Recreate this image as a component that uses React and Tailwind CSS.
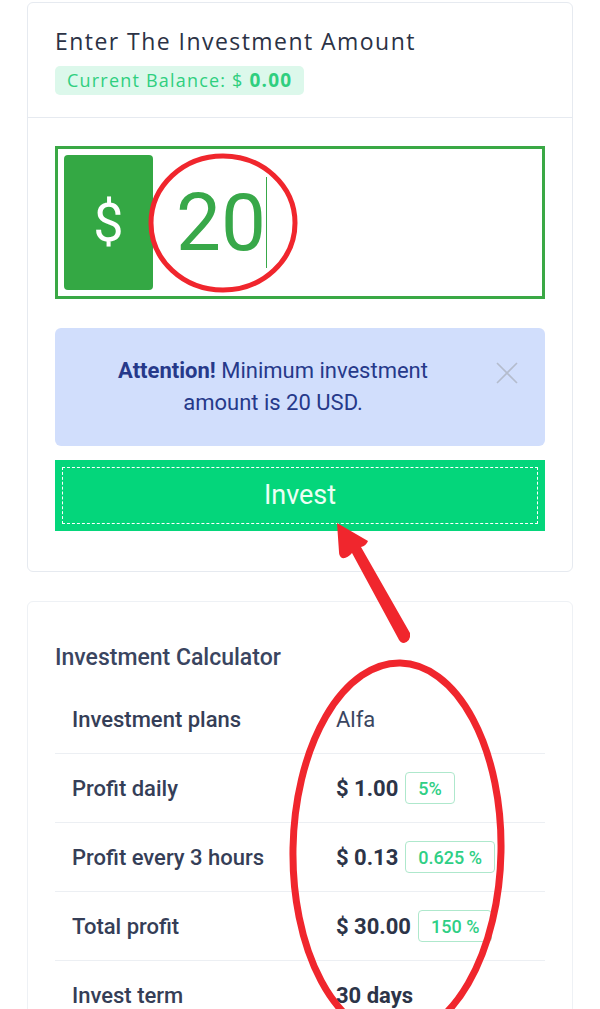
import React from "react";

const rows = [
  { label: "Investment plans", value: "Alfa", normal: true },
  { label: "Profit daily", value: "$ 1.00", badge: "5%" },
  { label: "Profit every 3 hours", value: "$ 0.13", badge: "0.625 %" },
  { label: "Total profit", value: "$ 30.00", badge: "150 %" },
  { label: "Invest term", value: "30 days" },
];

export default function App() {
  return (
    <div className="relative w-[600px] h-[1009px] overflow-hidden bg-white" style={{ fontFamily: "Roboto, 'Liberation Sans', sans-serif" }}>
      <div className="mx-[27px] pt-[2px] flex flex-col gap-[29px]">
        {/* Card 1 */}
        <div className="border border-[#e6eaf0] rounded-[6px] bg-white">
          <div className="px-[27px] pt-[23px] pb-[22px] border-b border-[#e6eaf0]">
            <div className="text-[23px] leading-[30px] font-medium text-[#2b3245] tracking-[1.45px]" style={{ fontFamily: "'Open Sans', sans-serif" }}>
              Enter The Investment Amount
            </div>
            <div className="mt-[10px] inline-flex items-center h-[29px] px-[12px] rounded-[5px] bg-[#dcf8eb] text-[#2fcf7f] text-[18px] tracking-[1.2px]" style={{ fontFamily: "'Open Sans', sans-serif" }}>
              Current Balance: $&nbsp;<span className="font-bold text-[19px]">0.00</span>
            </div>
          </div>
          <div className="px-[27px] pt-[28px] pb-[40px] flex flex-col">
            <div className="h-[153px] border-[3px] border-[#3aa845] p-[6px] flex">
              <div className="w-[89px] h-full rounded-[4px] bg-[#34a844] flex items-center justify-center text-white text-[54px] font-normal">$</div>
              <div className="flex items-center pl-[23px]">
                <span className="text-[#38a849] text-[80px] leading-none">20</span>
                <span className="w-[1px] h-[91px] bg-[#38a849]" />
              </div>
            </div>
            <div className="mt-[29px] h-[118px] rounded-[6px] bg-[#d1defc] relative flex items-center justify-center pr-[54px]">
              <p className="text-center text-[22px] leading-[32px] text-[#26398a] w-[340px]">
                <b className="font-bold">Attention!</b> Minimum investment amount is 20 USD.
              </p>
              <svg className="absolute right-[26px] top-[33px]" width="24" height="24" viewBox="0 0 24 24" fill="none" stroke="#b4bccd" strokeWidth="1.6">
                <path d="M2 2 L22 22 M22 2 L2 22" />
              </svg>
            </div>
            <button className="mt-[14px] h-[71px] bg-[#04d67b] p-[7px]">
              <div className="h-full border-[1.5px] border-dashed border-white flex items-center justify-center text-[27px] text-[#ecfff5]">
                Invest
              </div>
            </button>
          </div>
        </div>

        {/* Card 2 */}
        <div className="border border-[#eef1f5] rounded-[6px] bg-white px-[27px] pt-[42px] h-[500px]">
          <div className="text-[23px] leading-[28px] font-medium text-[#3a4560]">Investment Calculator</div>
          <div className="mt-[13px]">
            {rows.map((r, i) => (
              <div key={i} className={`flex items-center h-[69px] ${i < rows.length - 1 ? "border-b border-[#eceff3]" : ""}`}>
                <div className="w-[281px] pl-[17px] text-[22px] font-medium text-[#353e57]">{r.label}</div>
                <div className="flex items-center gap-[7px]">
                  <span className={`text-[22px] ${r.normal ? "font-normal text-[#3a4560]" : "font-bold text-[#2c3448]"}`}>{r.value}</span>
                  {r.badge && (
                    <span className="h-[32px] px-[12px] flex items-center rounded-[4px] border-[1.5px] border-[#aee8cc] text-[#2fcf85] text-[18px] font-medium">
                      {r.badge}
                    </span>
                  )}
                </div>
              </div>
            ))}
          </div>
        </div>
      </div>

      {/* Red annotations */}
      <svg className="absolute inset-0 pointer-events-none" width="600" height="1009" viewBox="0 0 600 1009">
        <ellipse cx="223" cy="223" rx="72" ry="67" fill="none" stroke="#f0262d" strokeWidth="5" />
        <ellipse cx="397" cy="850" rx="104" ry="187" fill="none" stroke="#f0262d" strokeWidth="7" transform="rotate(1 397 850)" />
        <path d="M337 523 L368 541 Q366 546 361 547 L410 633 Q411 641 404 643 Q400 643 398 638 L352 553 Q347 559 342 558 Q339 556 339 552 Z" fill="#f0262d" />
      </svg>
    </div>
  );
}
